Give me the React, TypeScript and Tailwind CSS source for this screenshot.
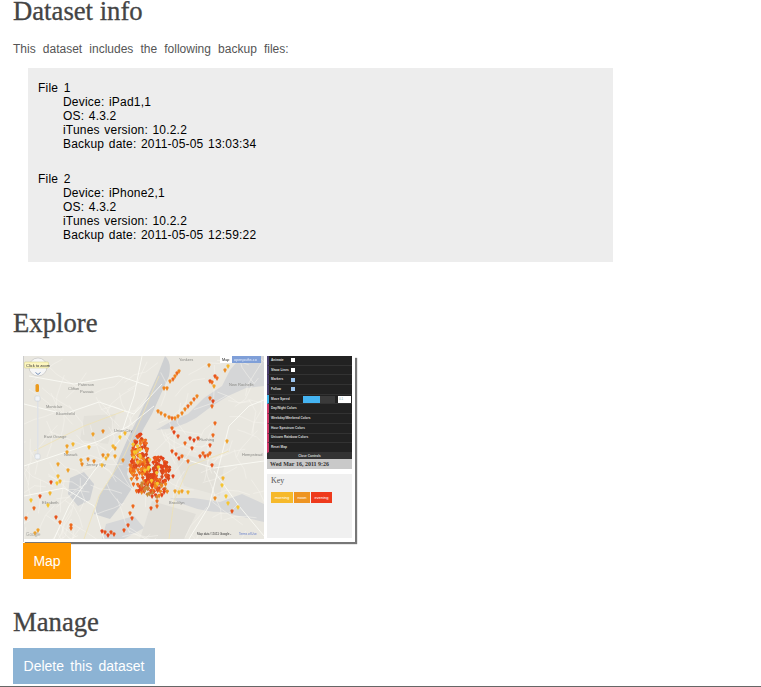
import React from "react";

const sans = "font-['Liberation_Sans',Arial,sans-serif]";
const serifHead = "font-['Liberation_Serif',Georgia,serif] text-[26.7px] text-[#444] [-webkit-text-stroke:0.3px_#444]";
const heading = `${serifHead} leading-[30px]`;

// small seeded random so the pins stay put between runs
function makeRandom(seed: number) {
  let s = seed;
  return () => {
    s = (s * 16807) % 2147483647;
    return s / 2147483647;
  };
}

const rand = makeRandom(4242);
const hot = ["#e8541c", "#ee6a1e", "#e2431a", "#f0851f", "#d9481c"];
const warm = ["#f0a22a", "#f4b62e", "#eb8b24", "#f6c52f"];
const red = ["#e2431a", "#e8541c", "#ee6a1e"];

type Pin = { x: number; y: number; c: string };

function cluster(cx: number, cy: number, rx: number, ry: number, n: number, colors: string[]): Pin[] {
  const out: Pin[] = [];
  for (let i = 0; i < n; i++) {
    const a = rand() * Math.PI * 2;
    const d = Math.sqrt(rand());
    out.push({
      x: cx + Math.cos(a) * d * rx,
      y: cy + Math.sin(a) * d * ry,
      c: colors[Math.floor(rand() * colors.length)],
    });
  }
  return out;
}

function line(pts: [number, number][], colors: string[]): Pin[] {
  return pts.map(([x, y]) => ({ x, y, c: colors[Math.floor(rand() * colors.length)] }));
}

const pins: Pin[] = [
  ...line([[153, 17], [151, 20], [149, 23], [146, 25], [155, 15], [143, 32], [140, 32], [134, 55], [137, 57], [141, 59], [145, 61], [148, 62], [151, 62], [154, 60], [158, 57], [161, 53], [164, 50], [167, 47], [170, 43], [173, 40]], ["#ee6a1e", "#f0851f"]),
  ...line([[148, 72], [150, 76], [154, 80], [161, 87], [174, 82], [166, 82], [170, 84], [164, 105], [158, 100], [148, 95], [152, 98], [155, 102], [149, 120], [176, 100], [168, 92]], red),
  ...line([[186, 25], [191, 20], [188, 26], [186, 42], [188, 50], [191, 67], [189, 79], [186, 89], [184, 99], [179, 97], [188, 109], [181, 100], [186, 97], [193, 22], [189, 45]], red),
  ...line([[204, 10], [185, 9], [201, 14], [190, 30], [203, 85], [199, 122], [198, 129], [202, 140], [204, 147], [214, 151], [191, 142], [151, 135], [158, 135], [164, 136], [155, 136]], warm),
  ...line([[208, 155], [133, 145], [133, 150], [127, 152], [109, 150], [106, 157], [108, 162], [104, 169], [100, 174], [78, 175], [84, 179], [90, 178], [81, 176], [87, 176]], red),
  ...line([[69, 78], [79, 75], [96, 81], [101, 77], [89, 90], [91, 92], [79, 99], [84, 99], [91, 100], [99, 104], [82, 102], [43, 90], [49, 88], [43, 96], [65, 91], [64, 103], [70, 105], [57, 104], [58, 108], [78, 109], [34, 108], [44, 114]], warm),
  ...line([[33, 127], [34, 120], [36, 125], [26, 137], [7, 144], [24, 149]], ["#f4b62e", "#f6c52f"]),
  ...line([[27, 126], [16, 140], [10, 152], [2, 162], [32, 161], [36, 166], [47, 169], [47, 172], [14, 174], [11, 177]], ["#e8541c", "#ee6a1e", "#f0a22a"]),
  ...cluster(116, 108, 10, 30, 130, hot),
  ...cluster(113, 100, 6, 16, 10, ["#f6c52f", "#f4b62e"]),
  ...cluster(134, 116, 12, 16, 90, ["#e2431a", "#e8541c", "#d9481c"]),
  ...cluster(130, 132, 15, 9, 55, ["#e8541c", "#c98a3a", "#e2431a", "#f0851f"]),
  ...cluster(128, 120, 9, 18, 8, ["#f6c52f"]),
];

function pinPath(x: number, y: number) {
  const r = 1.7;
  return `M${x - r} ${y} A${r} ${r} 0 1 1 ${x + r} ${y} L${x} ${y + 3} Z`;
}

// thin street mesh, just short random wiggles
const streets: string[] = [];
for (let i = 0; i < 130; i++) {
  let x = rand() * 240;
  let y = rand() * 183;
  let d = `M${x.toFixed(1)} ${y.toFixed(1)}`;
  const a = rand() * Math.PI;
  for (let k = 0; k < 3; k++) {
    x += Math.cos(a + (rand() - 0.5)) * 12;
    y += Math.sin(a + (rand() - 0.5)) * 12;
    d += ` L${x.toFixed(1)} ${y.toFixed(1)}`;
  }
  streets.push(d);
}

const labels: [string, number, number][] = [
  ["Paterson", 54, 30],
  ["Passaic", 56, 37],
  ["Clifton", 44, 34],
  ["Bloomfield", 32, 59],
  ["Montclair", 22, 52],
  ["Union City", 90, 76],
  ["Newark", 40, 100],
  ["Jersey City", 62, 110],
  ["Elizabeth", 18, 148],
  ["East Orange", 20, 82],
  ["Yonkers", 155, 5],
  ["New Rochelle", 205, 30],
  ["Flushing", 175, 85],
  ["Brooklyn", 145, 148],
  ["Hempstead", 218, 100],
];

function MapPicture() {
  return (
    <svg width="240" height="183" viewBox="0 0 240 183" className="block shrink-0 blur-[0.4px]">
      <rect width="240" height="183" fill="#e9e7e0" />
      {/* water */}
      <path d="M141 0 Q148 6 145 20 L136 40 L128 58 L120 72 L112 88 L106 104 L103 118 L108 132 L98 148 L86 163 L70 158 L76 138 L88 120 L96 100 L104 82 L114 62 L124 40 L134 18 Z" fill="#ced0d2" />
      <path d="M132 74 Q152 74 172 62 L188 50 L204 40 L222 32 L240 30 L240 0 L218 0 L206 14 L198 30 L180 42 L164 58 L146 66 Z" fill="#d5d6d7" />
      <path d="M46 122 L60 116 L70 128 L66 144 L54 150 L44 138 Z" fill="#cfd1d3" />
      <path d="M146 142 Q172 156 198 156 L240 166 L240 148 L218 138 L196 146 L170 142 Z" fill="#d6d7d8" />
      <path d="M82 168 L110 160 L120 172 L100 183 L78 183 Z" fill="#d6d7d8" />
      {/* land tints */}
      <path d="M128 145 L172 158 L160 183 L116 183 Z" fill="#e0ded8" />
      <path d="M150 95 L200 110 L196 140 L160 130 Z" fill="#e3e1da" />
      <path d="M60 60 L92 58 L84 88 L56 84 Z" fill="#e3e1da" />
      {/* roads */}
      <g stroke="#f6f5ef" strokeWidth="0.5" fill="none">
        {streets.map((d, i) => (
          <path key={i} d={d} />
        ))}
      </g>
      <g stroke="#fbfaf5" strokeWidth="0.9" fill="none">
        <path d="M0 48 L40 58 L75 46 L110 58 L138 28" />
        <path d="M0 110 L45 95 L75 85 L105 70 L130 50" />
        <path d="M30 183 L45 150 L70 115 L95 85 L110 40 L118 0" />
        <path d="M5 20 L50 28 L95 20 L125 30" />
        <path d="M165 183 L185 150 L195 110 L205 70 L225 50 L240 44" />
        <path d="M150 100 L190 112 L240 105" />
        <path d="M190 115 L215 150 L240 180" />
        <path d="M0 140 L40 132 L70 150 L80 183" />
      </g>
      <g stroke="#efe2b4" strokeWidth="0.8" fill="none">
        <path d="M60 183 L75 140 L100 100 L118 60 L135 20" />
        <path d="M10 95 L60 70 L100 55" />
        <path d="M145 183 L150 145 L165 110 L205 95" />
      </g>
      {labels.map(([t, x, y]) => (
        <text key={t} x={x} y={y} fontSize="4" fill="#8a8a86" fontFamily="Liberation Sans, sans-serif">{t}</text>
      ))}
      {/* pins */}
      {pins.map((p, i) => (
        <path key={i} d={pinPath(p.x, p.y)} fill={p.c} />
      ))}
      {/* pan + zoom */}
      <circle cx="14" cy="11" r="9" fill="#f6f6f6" stroke="#b5b5b5" strokeWidth="0.5" />
      <path d="M11.5 16.5 L14 18.5 L16.5 16.5" stroke="#5577aa" strokeWidth="0.8" fill="none" />
      <rect x="0.5" y="6" width="24" height="6" rx="1" fill="#fdf6c0" stroke="#c8c46a" strokeWidth="0.4" />
      <text x="2" y="10.5" fontSize="4" fill="#333" fontFamily="Liberation Sans, sans-serif">Click to zoom</text>
      <rect x="13" y="42" width="1.5" height="60" fill="#dfe2e6" />
      <rect x="11" y="40" width="5" height="5" rx="1" fill="#f0f3f7" stroke="#b9c2cc" strokeWidth="0.4" />
      <rect x="11" y="98" width="5" height="5" rx="1" fill="#f0f3f7" stroke="#b9c2cc" strokeWidth="0.4" />
      <rect x="11.5" y="28" width="3.5" height="8" rx="1.5" fill="#eb9a1c" />
      {/* corner pills */}
      <rect x="196" y="0" width="12" height="7" fill="#fff" />
      <text x="198" y="5" fontSize="3.8" fill="#222" fontFamily="Liberation Sans, sans-serif">Map</text>
      <rect x="208" y="0" width="29" height="7" fill="#7f9fd8" />
      <text x="210" y="5" fontSize="3.8" fill="#e8eefa" fontFamily="Liberation Sans, sans-serif">openpaths.co</text>
      <text x="2" y="180" fontSize="4.5" fill="#a9a9a4" fontFamily="Liberation Sans, sans-serif">Google</text>
      <text x="173" y="179" fontSize="3" fill="#333" fontFamily="Liberation Sans, sans-serif">Map data ©2011 Google -</text>
      <text x="215" y="179" fontSize="3" fill="#5f78c8" fontFamily="Liberation Sans, sans-serif">Terms of Use</text>
    </svg>
  );
}

function Row({ label, bar, children }: { label: string; bar: string; children?: React.ReactNode }) {
  return (
    <div className={`flex h-[9.7px] items-center border-b border-l-2 border-b-[#333] pl-[2px] ${bar}`}>
      <span className="w-[27px] whitespace-nowrap text-[3.2px] font-bold text-[#ddd]">{label}</span>
      {children}
    </div>
  );
}

function Thumbnail() {
  return (
    <div className={`ml-[10px] mt-[18px] flex h-[186px] w-[332px] border-l border-l-[#ccc] bg-white shadow-[2px_2px_1px_#777] ${sans}`}>
      <MapPicture />
      <div className="ml-[3px] flex w-[85px] flex-col">
        <div className="bg-[#222]">
          <Row label="Animate" bar="border-l-[#4b3f6e]">
            <span className="ml-[-7px] h-[4px] w-[4px] bg-white" />
          </Row>
          <Row label="Show Lines" bar="border-l-[#4b3f6e]">
            <span className="ml-[-7px] h-[4px] w-[4px] bg-white" />
          </Row>
          <Row label="Markers" bar="border-l-[#4b3f6e]">
            <span className="ml-[-7px] h-[4px] w-[4px] bg-[#9cc4ee]" />
          </Row>
          <Row label="Follow" bar="border-l-[#4b3f6e]">
            <span className="ml-[-7px] h-[4px] w-[4px] bg-[#9cc4ee]" />
          </Row>
          <Row label="Move Speed" bar="border-l-[#3eb4ec]">
            <span className="ml-[5px] flex h-[7px] w-[32px] bg-[#3a3a3a]">
              <span className="h-full w-[17px] bg-[#45b4f2]" />
            </span>
            <span className="ml-[3px] h-[7px] w-[13px] bg-white pl-px text-[3px] leading-[7px] text-[#7aa]">0.1</span>
          </Row>
          <Row label="Day/Night Colors" bar="border-l-[#d13a6b]" />
          <Row label="Weekday/Weekend Colors" bar="border-l-[#d13a6b]" />
          <Row label="Hour Spectrum Colors" bar="border-l-[#d13a6b]" />
          <Row label="Unicorn Rainbow Colors" bar="border-l-[#d13a6b]" />
          <Row label="Reset Map" bar="border-l-[#d13a6b]" />
          <div className="h-[6px] bg-[#333] text-center text-[3.2px] font-bold leading-[6px] text-[#ddd]">Close Controls</div>
        </div>
        <div className="h-[10px] bg-[#c9c9c9] pl-[3px] font-['Liberation_Serif',serif] text-[6px] font-bold leading-[10px] text-[#333]">
          Wed Mar 16, 2011 9:26
        </div>
        <div className="mt-[5px] h-[64px] bg-[#f0f0f0] pl-[4px] pt-[2px]">
          <div className="font-['Liberation_Serif',serif] text-[8px] leading-[10px] text-[#555]">Key</div>
          <div className="mt-[6px] flex gap-px text-[4px] leading-[11px] text-white">
            <span className="w-[22px] bg-[#f6b92b] text-center">morning</span>
            <span className="w-[16px] bg-[#ee9422] text-center">noon</span>
            <span className="w-[21px] bg-[#ee3a1c] text-center">evening</span>
          </div>
        </div>
      </div>
    </div>
  );
}

export default function App() {
  return (
    <div className={`h-[687px] w-[761px] overflow-hidden bg-white ${sans}`}>
      <div className="h-[687px] border-b border-[#666] px-[13px]">
        <h2 className={`${serifHead} leading-[23px]`}>Dataset info</h2>
        <p className="mt-[18px] text-[12px] leading-[16px] text-[#555] [word-spacing:3.8px]">
          This dataset includes the following backup files:
        </p>
        <div className="ml-[15px] mt-[11px] h-[194px] w-[585px] bg-[#ededed] pl-[10px] pt-[13px] text-[12px] leading-[14px] tracking-[0.2px] text-black [word-spacing:1px]">
          <div className="[word-spacing:2px]">File 1</div>
          <div className="pl-[25px]">Device: iPad1,1</div>
          <div className="pl-[25px]">OS: 4.3.2</div>
          <div className="pl-[25px]">iTunes version: 10.2.2</div>
          <div className="pl-[25px]">Backup date: 2011-05-05 13:03:34</div>
          <div className="mt-[21px] [word-spacing:2px]">File 2</div>
          <div className="pl-[25px]">Device: iPhone2,1</div>
          <div className="pl-[25px]">OS: 4.3.2</div>
          <div className="pl-[25px]">iTunes version: 10.2.2</div>
          <div className="pl-[25px]">Backup date: 2011-05-05 12:59:22</div>
        </div>
        <h2 className={`mt-[46px] ${heading}`}>Explore</h2>
        <Thumbnail />
        <div className="ml-[10px] mt-px h-[36px] w-[48px] bg-[#ff9900] text-center text-[14px] leading-[36px] text-white">Map</div>
        <h2 className={`mt-[28px] ${heading}`}>Manage</h2>
        <div className="mt-[11px] h-[36px] w-[142px] bg-[#8cb3d4] text-center text-[14px] leading-[36px] text-white [word-spacing:2.5px]">
          Delete this dataset
        </div>
      </div>
    </div>
  );
}
